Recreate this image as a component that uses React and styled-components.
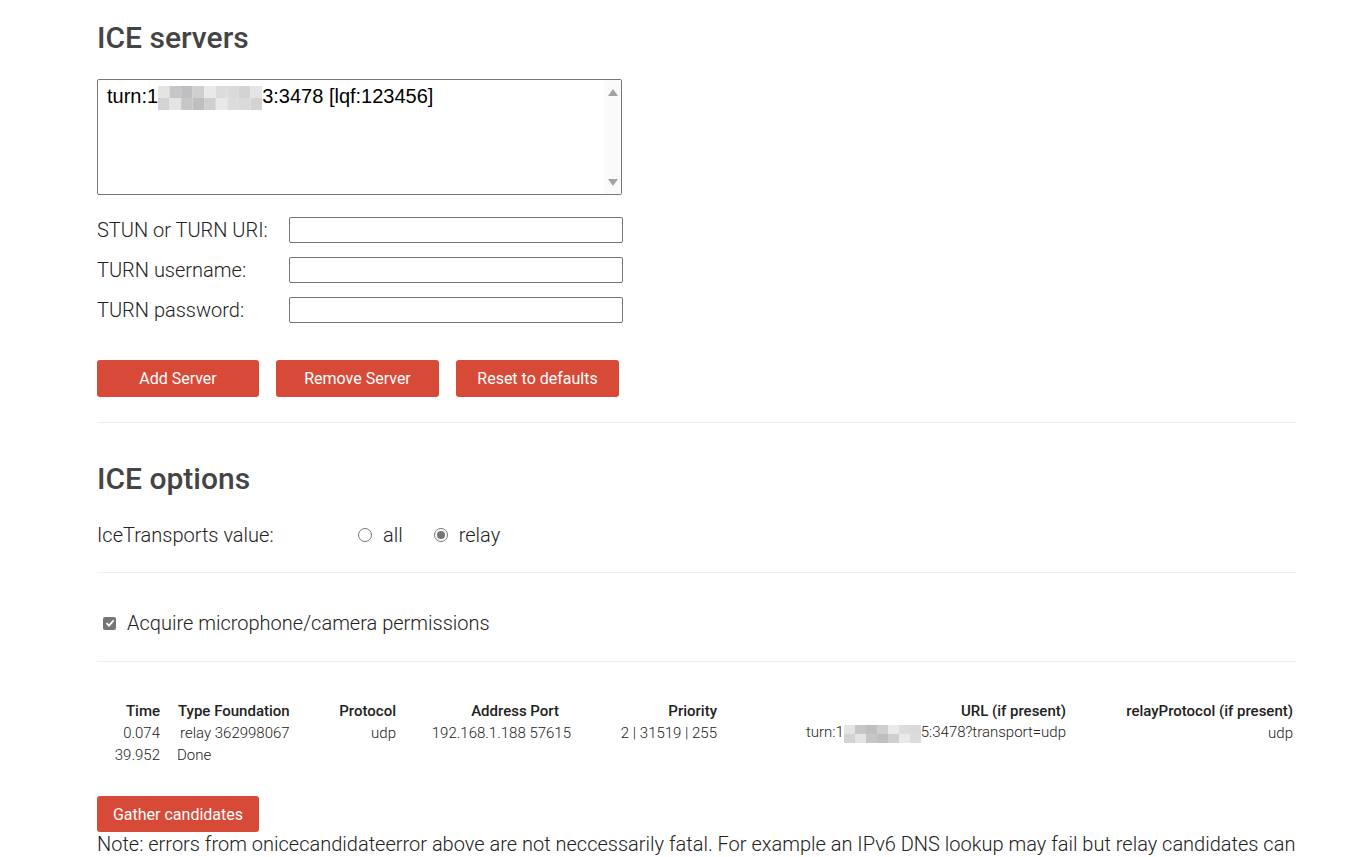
import React from "react";
import styled, { createGlobalStyle } from "styled-components";

const GlobalStyle = createGlobalStyle`
  html, body {
    margin: 0;
    padding: 0;
    background: #fff;
  }
  body {
    font-family: Roboto, "Noto Sans", sans-serif;
    font-weight: 300;
    color: #222;
  }
`;

const Page = styled.div`
  width: 1199px;
  padding-left: 97px;
  height: 857px;
  overflow: hidden;
`;

const Heading = styled.h2`
  margin: ${(p) => p.$top}px 0 0;
  font-size: 30px;
  line-height: 36px;
  font-weight: 500;
  color: #444;
`;

const ServerList = styled.div`
  margin-top: 23px;
  width: 525px;
  height: 116px;
  box-sizing: border-box;
  border: 1px solid #767676;
  border-radius: 2px;
  display: flex;
`;

const ServerItems = styled.div`
  flex: 1;
  padding: 4px 0 0 9px;
  font-family: "Liberation Sans", Arial, sans-serif;
  font-weight: 400;
  font-size: 20px;
  line-height: 24px;
  color: #000;
`;

const FakeScroll = styled.div`
  width: 17px;
  background: #fafafa;
  display: flex;
  flex-direction: column;
  justify-content: space-between;
  align-items: center;
  padding: 9px 0 8px;
`;

const Arrow = styled.span`
  width: 0;
  height: 0;
  border-left: 5px solid transparent;
  border-right: 5px solid transparent;
  ${(p) =>
    p.$down
      ? "border-top: 7px solid #a3a3a3;"
      : "border-bottom: 7px solid #a3a3a3;"}
`;

const FormRows = styled.div`
  margin-top: 22px;
  display: flex;
  flex-direction: column;
  gap: 14px;
`;

const FormRow = styled.div`
  display: flex;
  align-items: center;
`;

const Label = styled.label`
  width: ${(p) => p.$w || 192}px;
  font-size: 20px;
  line-height: 26px;
  color: #222;
`;

const TextInput = styled.input`
  width: 334px;
  height: 26px;
  box-sizing: border-box;
  border: 1px solid #767676;
  border-radius: 2px;
  margin: 0;
  font-family: inherit;
`;

const ButtonRow = styled.div`
  margin-top: 37px;
  display: flex;
  gap: 17px;
`;

const RedButton = styled.button`
  width: ${(p) => p.$w}px;
  height: ${(p) => p.$h || 37}px;
  margin: 0;
  padding: 0;
  border: none;
  border-radius: 3px;
  background: #d84a38;
  color: #fff;
  font-family: Roboto, sans-serif;
  font-weight: 400;
  font-size: 16px;
  cursor: pointer;
`;

const Rule = styled.hr`
  margin: ${(p) => p.$top}px 0 0;
  border: none;
  border-top: 1px solid #eee;
  height: 0;
`;

const OptionRow = styled.div`
  margin-top: ${(p) => p.$top}px;
  height: 28px;
  display: flex;
  align-items: center;
  font-size: 20px;
`;

const RadioGroup = styled.div`
  display: flex;
  align-items: center;
  gap: 31px;
`;

const Choice = styled.label`
  display: flex;
  align-items: center;
  gap: 11px;
`;

const Radio = styled.span`
  width: 14px;
  height: 14px;
  box-sizing: border-box;
  border-radius: 50%;
  border: 1px solid #767676;
  display: flex;
  align-items: center;
  justify-content: center;
  &::after {
    content: "";
    width: 8px;
    height: 8px;
    border-radius: 50%;
    background: ${(p) => (p.$on ? "#767676" : "transparent")};
  }
`;

const CheckBox = styled.span`
  margin-left: 6px;
  margin-right: 11px;
  width: 13px;
  height: 13px;
  border-radius: 2px;
  background: #767676;
  display: flex;
  align-items: center;
  justify-content: center;
`;

const Candidates = styled.table`
  margin-top: 38px;
  width: 1199px;
  border-collapse: collapse;
  table-layout: fixed;
  font-size: 15px;
`;

const Th = styled.th`
  height: 22px;
  padding: 0 ${(p) => p.$pr ?? 8}px 0 ${(p) => p.$pl ?? 0}px;
  text-align: ${(p) => p.$align || "right"};
  font-weight: 500;
  color: #222;
  white-space: nowrap;
`;

const Td = styled.td`
  height: 22px;
  padding: 0 ${(p) => p.$pr ?? 8}px 0 ${(p) => p.$pl ?? 0}px;
  text-align: ${(p) => p.$align || "right"};
  color: #222;
  white-space: nowrap;
`;

const GatherWrap = styled.div`
  margin-top: 30px;
`;

const Note = styled.p`
  margin: 0;
  font-size: 20px;
  line-height: 25px;
  color: #222;
  width: 1199px;
`;

function Mosaic({ w, h }) {
  const cols = Math.round(w / 11);
  const shades = ["#e4e4e4", "#cfcfcf", "#dadada", "#c6c6c9", "#e9e9e9", "#d3d3d3", "#bfbfc2", "#dcdcdc"];
  const cells = [];
  for (let r = 0; r < 2; r++) {
    for (let c = 0; c < cols; c++) {
      cells.push(
        <rect
          key={r + "-" + c}
          x={c * (w / cols)}
          y={r * (h / 2)}
          width={w / cols}
          height={h / 2}
          fill={shades[(c * 3 + r * 5) % shades.length]}
        />
      );
    }
  }
  return (
    <svg width={w} height={h} style={{ verticalAlign: "middle" }}>
      {cells}
    </svg>
  );
}

export default function App() {
  return (
    <Page>
      <GlobalStyle />
      <Heading $top={20}>ICE servers</Heading>
      <ServerList>
        <ServerItems>
          turn:1<Mosaic w={104} h={24} />
          3:3478 [lqf:123456]
        </ServerItems>
        <FakeScroll>
          <Arrow />
          <Arrow $down />
        </FakeScroll>
      </ServerList>

      <FormRows>
        <FormRow>
          <Label>STUN or TURN URI:</Label>
          <TextInput />
        </FormRow>
        <FormRow>
          <Label>TURN username:</Label>
          <TextInput />
        </FormRow>
        <FormRow>
          <Label>TURN password:</Label>
          <TextInput />
        </FormRow>
      </FormRows>

      <ButtonRow>
        <RedButton $w={162}>Add Server</RedButton>
        <RedButton $w={163}>Remove Server</RedButton>
        <RedButton $w={163}>Reset to defaults</RedButton>
      </ButtonRow>

      <Rule $top={25} />

      <Heading $top={38}>ICE options</Heading>
      <OptionRow $top={24}>
        <Label $w={261}>IceTransports value:</Label>
        <RadioGroup>
          <Choice>
            <Radio />
            all
          </Choice>
          <Choice>
            <Radio $on />
            relay
          </Choice>
        </RadioGroup>
      </OptionRow>

      <Rule $top={23} />

      <OptionRow $top={36}>
        <CheckBox>
          <svg width="10" height="10" viewBox="0 0 10 10">
            <path d="M1.5 5.2 L4 7.6 L8.6 2.4" stroke="#fff" strokeWidth="1.8" fill="none" />
          </svg>
        </CheckBox>
        Acquire microphone/camera permissions
      </OptionRow>

      <Rule $top={24} />

      <Candidates>
        <colgroup>
          <col style={{ width: 71 }} />
          <col style={{ width: 132 }} />
          <col style={{ width: 104 }} />
          <col style={{ width: 176 }} />
          <col style={{ width: 145 }} />
          <col style={{ width: 349 }} />
          <col style={{ width: 222 }} />
        </colgroup>
        <thead>
          <tr>
            <Th>Time</Th>
            <Th $align="left" $pl={10}>Type Foundation</Th>
            <Th>Protocol</Th>
            <Th $pr={21}>Address Port</Th>
            <Th>Priority</Th>
            <Th>URL (if present)</Th>
            <Th $pr={3}>relayProtocol (if present)</Th>
          </tr>
        </thead>
        <tbody>
          <tr>
            <Td>0.074</Td>
            <Td $align="left" $pl={12}>relay 362998067</Td>
            <Td>udp</Td>
            <Td $pr={9}>192.168.1.188 57615</Td>
            <Td>2 | 31519 | 255</Td>
            <Td>
              turn:1<Mosaic w={77} h={18} />5:3478?transport=udp
            </Td>
            <Td $pr={3}>udp</Td>
          </tr>
          <tr>
            <Td>39.952</Td>
            <Td $align="left" $pl={9}>Done</Td>
            <Td />
            <Td />
            <Td />
            <Td />
            <Td />
          </tr>
        </tbody>
      </Candidates>

      <GatherWrap>
        <RedButton $w={162} $h={36}>Gather candidates</RedButton>
      </GatherWrap>
      <Note>
        Note: errors from onicecandidateerror above are not neccessarily fatal. For example an IPv6 DNS lookup may fail but relay candidates can
        still be gathered.
      </Note>
    </Page>
  );
}
